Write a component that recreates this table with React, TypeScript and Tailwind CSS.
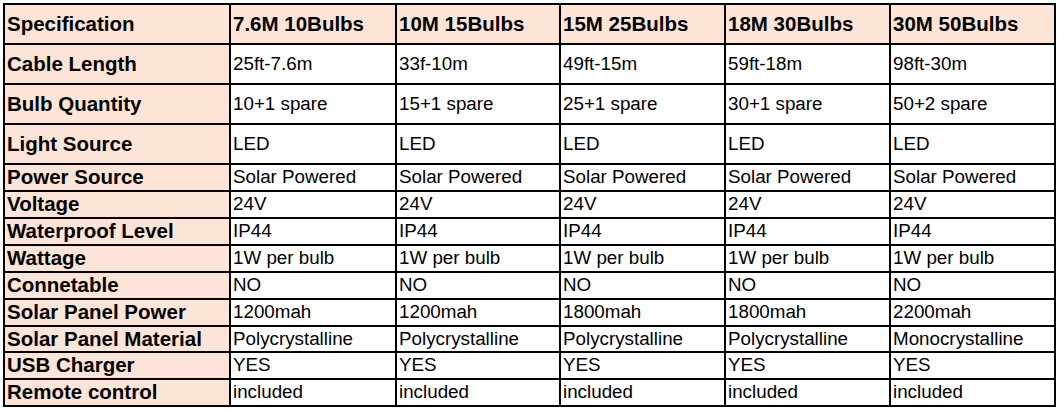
const header = ["Specification", "7.6M 10Bulbs", "10M 15Bulbs", "15M 25Bulbs", "18M 30Bulbs", "30M 50Bulbs"];

const rows: string[][] = [
  ["Cable Length", "25ft-7.6m", "33f-10m", "49ft-15m", "59ft-18m", "98ft-30m"],
  ["Bulb Quantity", "10+1 spare", "15+1 spare", "25+1 spare", "30+1 spare", "50+2 spare"],
  ["Light Source", "LED", "LED", "LED", "LED", "LED"],
  ["Power Source", "Solar Powered", "Solar Powered", "Solar Powered", "Solar Powered", "Solar Powered"],
  ["Voltage", "24V", "24V", "24V", "24V", "24V"],
  ["Waterproof Level", "IP44", "IP44", "IP44", "IP44", "IP44"],
  ["Wattage", "1W per bulb", "1W per bulb", "1W per bulb", "1W per bulb", "1W per bulb"],
  ["Connetable", "NO", "NO", "NO", "NO", "NO"],
  ["Solar Panel Power", "1200mah", "1200mah", "1800mah", "1800mah", "2200mah"],
  ["Solar Panel Material", "Polycrystalline", "Polycrystalline", "Polycrystalline", "Polycrystalline", "Monocrystalline"],
  ["USB Charger", "YES", "YES", "YES", "YES", "YES"],
  ["Remote control", "included", "included", "included", "included", "included"],
];

export default function App() {
  return (
    <div className="w-[1057px] h-[409px] bg-white pt-[3px] pl-[3px] font-['Liberation_Sans',Arial,sans-serif] text-black">
      <div className="grid w-max grid-cols-[224px_164px_162px_163px_163px_163px] grid-rows-[38px_38px_38px_38px_25px_25px_25px_25px_25px_25px_24px_25px_25px] gap-[2px] bg-black p-[2px]">
        {header.map((h) => (
          <div key={h} className="flex items-center bg-[#fce4d6] pl-[2px] text-[20.5px] font-bold leading-none">
            {h}
          </div>
        ))}
        {rows.map((r) => (
          <>
            <div key={r[0]} className="flex items-center bg-[#fce4d6] pl-[2px] text-[20.5px] font-bold leading-none whitespace-nowrap">
              {r[0]}
            </div>
            {r.slice(1).map((v, i) => (
              <div key={r[0] + i} className="flex items-center bg-white pl-[2px] text-[18.8px] leading-none whitespace-nowrap">
                {v}
              </div>
            ))}
          </>
        ))}
      </div>
    </div>
  );
}
